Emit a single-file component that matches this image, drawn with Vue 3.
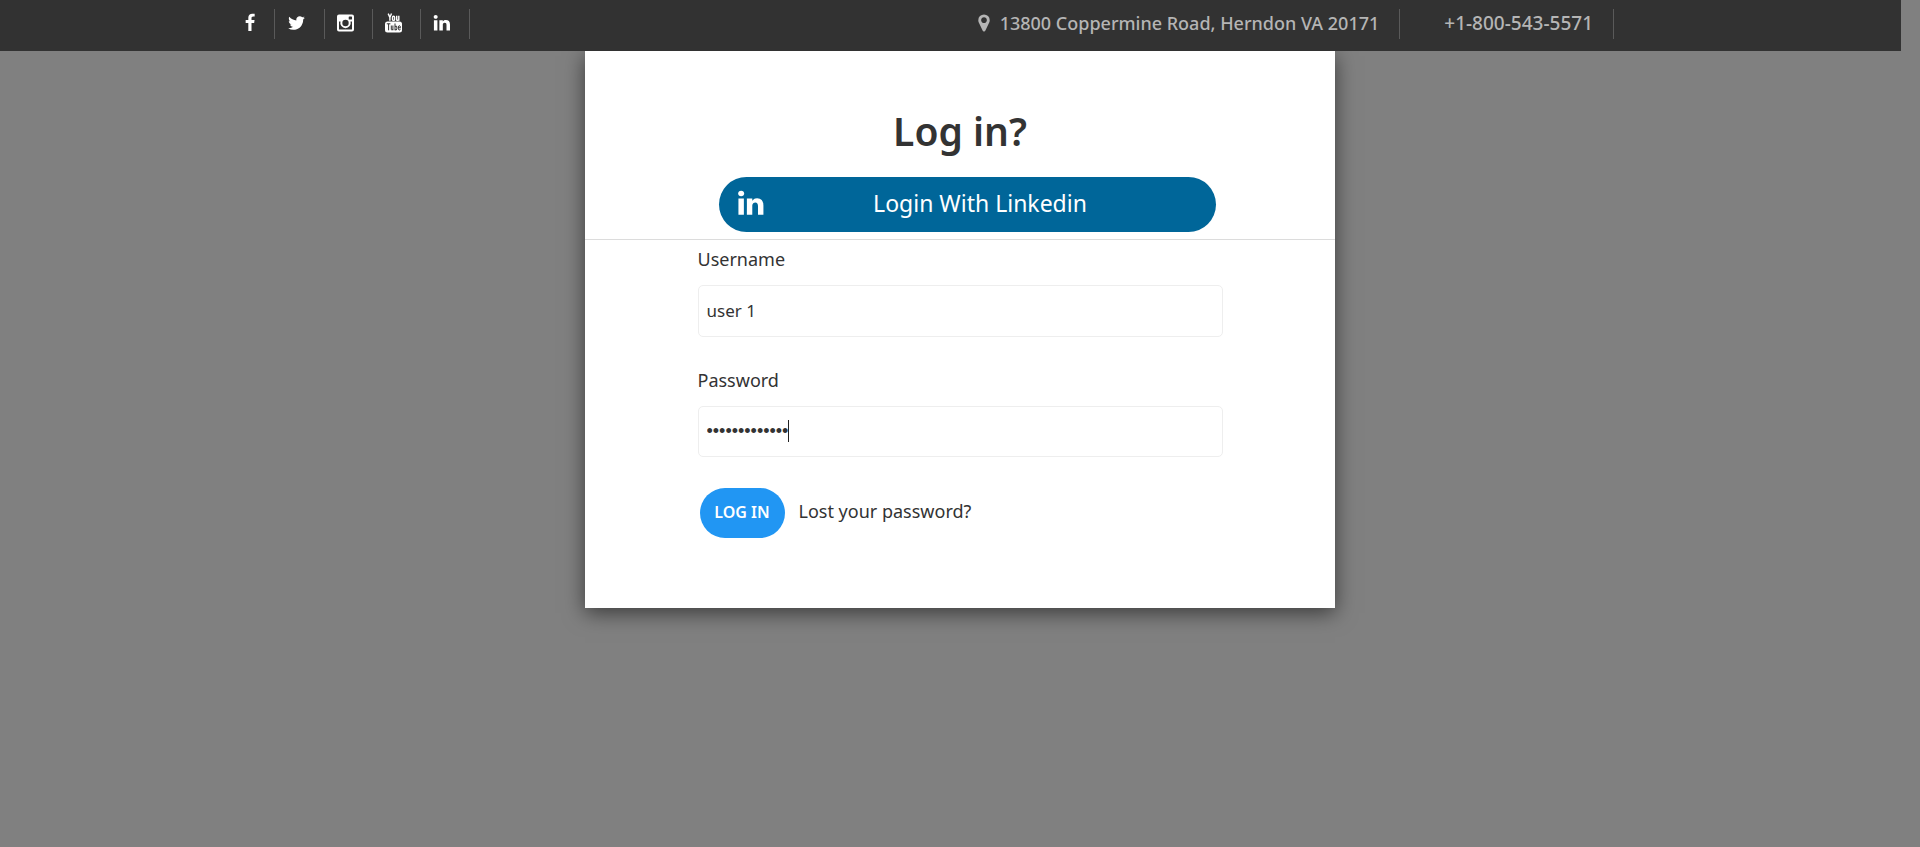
<script setup>
import { ref } from 'vue'

const username = ref('user 1')
const password = ref('secretpass123')

const linkedinPath = 'M477 625v991h-330v-991h330zm21-306q1 73-50.500 122t-135.500 49h-2q-82 0-132-49t-50-122q0-74 51.500-122.500t134.500-48.500 133 48.500 51 122.500zm1166 729v568h-329v-530q0-105-40.500-164.500t-126.500-59.500q-63 0-105.500 34.500t-63.500 85.500q-11 30-11 81v553h-329q2-399 2-647t-1-296l-1-48h329v144h-2q20-32 41-56t56.500-52 87-43.500 114.500-15.500q171 0 275 113.500t104 332.500z'
</script>

<template>
  <div class="page">
    <header class="topbar">
      <nav class="social">
        <a href="#" aria-label="Facebook">
          <svg width="12" height="20" viewBox="320 0 1152 1792"><path d="M1343 12v264h-157q-86 0-116 36t-30 108v189h293l-39 296h-254v759h-306v-759h-255v-296h255v-218q0-186 104-288.500t277-102.500q147 0 228 12z" /></svg>
        </a>
        <a href="#" aria-label="Twitter">
          <svg width="19" height="20" viewBox="0 0 1792 1792"><path d="M1684 408q-67 98-162 167 1 14 1 42 0 130-38 259.500t-115.500 248.500-184.500 210.500-258 146-323 54.500q-271 0-496-145 35 4 78 4 225 0 401-138-105-2-188-64.500t-114-159.500q33 5 61 5 43 0 85-11-112-23-185.500-111.500t-73.500-205.500v-4q68 38 146 41-66-44-105-115t-39-154q0-88 44-163 121 149 294.500 238.500t371.500 99.500q-8-38-8-74 0-134 94.500-228.500t228.500-94.500q140 0 236 102 109-21 205-78-37 115-142 178 93-10 186-50z" /></svg>
        </a>
        <a href="#" aria-label="Instagram">
          <svg width="17" height="20" viewBox="0 0 17 20"><path fill-rule="evenodd" d="M2 1.500h13a2 2 0 0 1 2 2v13a2 2 0 0 1-2 2H2a2 2 0 0 1-2-2v-13a2 2 0 0 1 2-2zM2 8.500v7.400q0 .6.6.6h11.800q.6 0 .6-.6V8.500h-1.500a5.200 5.200 0 1 1-10 0zM12.300 3.500q-.6 0-.6.6v1.800q0 .6.6.6h2.100q.6 0 .6-.6V4.100q0-.6-.6-.6z" /><circle cx="8.500" cy="10" r="3.200" class="hole" /></svg>
        </a>
        <a href="#" aria-label="YouTube">
          <svg width="17" height="20" viewBox="0 0 17 20">
            <g class="stroke">
              <path d="M3.200.6 4.900 4.400 6.500.6M4.900 4.400V7.800" />
              <rect x="7.500" y="3.200" width="2.100" height="4.200" rx="1" />
              <path d="M11.700 2.700v3.900q0 .9.800.8 1-.2 1.300-1M13.800 2.700v5.100" />
            </g>
            <rect x="0" y="8.500" width="17" height="11" rx="2.500" />
            <g class="stroke dark">
              <path d="M1.800 10.800h3.600M3.600 10.800v6.500M6.300 12.500v3.800q0 .8.700.6.700-.2.900-.8M7.900 12.500v4.800M10 10.500v6.800M10 13.500q1.800-1.200 1.800.4v1.900q0 1.800-1.800.9M15.300 15.800q0 1.200-.9 1.200-1 0-1-1.200v-1.900q0-1.200 1-1.200.9 0 .9 1.200v.9h-1.900" />
            </g>
          </svg>
        </a>
        <a href="#" aria-label="LinkedIn">
          <svg width="18" height="20" viewBox="60 0 1700 1792"><path :d="linkedinPath" /></svg>
        </a>
      </nav>
      <div class="contact">
        <span class="item address">
          <svg width="12" height="20" viewBox="360 0 1072 1792"><path d="M1152 640q0-106-75-181t-181-75-181 75-75 181 75 181 181 75 181-75 75-181zm256 0q0 109-33 179l-364 774q-16 33-47.500 52t-67.500 19-67.500-19-46.500-52l-365-774q-33-70-33-179 0-212 150-362t362-150 362 150 150 362z" /></svg>
          13800 Coppermine Road, Herndon VA 20171
        </span>
        <span class="item phone">+1-800-543-5571</span>
      </div>
    </header>

    <main class="modal">
      <h1>Log in?</h1>
      <div class="inner">
        <button type="button" class="linkedin">
          <svg width="28" height="30" viewBox="60 0 1700 1792"><path :d="linkedinPath" /></svg>
          <span>Login With Linkedin</span>
        </button>
      </div>
      <hr />
      <form class="inner" @submit.prevent>
        <label for="username">Username</label>
        <input id="username" v-model="username" type="text" />
        <label for="password">Password</label>
        <div class="field">
          <input id="password" v-model="password" type="password" />
          <span class="caret"></span>
        </div>
        <div class="actions">
          <button type="submit" class="submit">LOG IN</button>
          <a href="#">Lost your password?</a>
        </div>
      </form>
    </main>
  </div>
</template>

<style>
html,
body {
  background: #808080;
}
</style>

<style scoped>
.page {
  min-height: 100vh;
  font-family: "Noto Sans", "Open Sans", sans-serif;
  font-size: 18px;
  color: #333;
}
.page * {
  box-sizing: border-box;
}
svg {
  display: block;
  flex: none;
  fill: currentColor;
}
.topbar {
  position: relative;
  z-index: 1;
  display: flex;
  justify-content: space-between;
  margin-right: 19px;
  padding: 9px 287px 12px 232px;
  background: #323232;
}
.social,
.contact {
  display: flex;
}
.social a {
  display: flex;
  align-items: center;
  height: 30px;
  padding: 0 18px 2px 12px;
  border-right: 1px solid #5a5a5a;
  color: #fff;
}
.hole {
  fill: #323232;
}
.stroke {
  fill: none;
  stroke: currentColor;
  stroke-width: 1.4;
}
.dark {
  stroke: #323232;
  stroke-width: 1;
}
.item {
  display: flex;
  align-items: center;
  gap: 10px;
  height: 30px;
  padding: 0 20px 2px 0;
  border-right: 1px solid #5a5a5a;
  color: #b5b5b5;
  font-weight: 500;
  white-space: nowrap;
}
.phone {
  padding-left: 44px;
  font-size: 19px;
}
.modal {
  width: 750px;
  max-width: 100%;
  margin: 0 auto;
  padding: 52px 0 70px;
  background: #fff;
  box-shadow: 0 5px 20px rgba(0, 0, 0, 0.55);
}
h1 {
  margin: 0 0 18px;
  font-size: 39px;
  line-height: 56px;
  font-weight: 600;
  text-align: center;
}
.inner {
  padding: 0 15%;
}
.linkedin {
  display: flex;
  align-items: center;
  width: calc(100% - 28px);
  height: 55px;
  margin-left: 21px;
  padding: 0 20px 4px 18px;
  border: 0;
  border-radius: 28px;
  background: #006699;
  color: #fff;
  font: 400 23px "Noto Sans", sans-serif;
}
.linkedin span {
  flex: 1;
}
hr {
  height: 1px;
  margin: 7px 0;
  border: 0;
  background: #dcdcdc;
}
label {
  display: block;
  margin-bottom: 14px;
  line-height: 24px;
}
input {
  display: block;
  width: 100%;
  height: 52px;
  margin-bottom: 31px;
  padding: 0 8px 2px;
  border: 1px solid #eee;
  border-radius: 5px;
  outline: 0;
  background: #fff;
  color: #333;
  font: 17px "Noto Sans", sans-serif;
}
.field {
  position: relative;
}
.field input {
  height: 51px;
  padding-bottom: 0;
  font: 18px "Liberation Sans", sans-serif;
}
.caret {
  position: absolute;
  top: 14px;
  left: 90px;
  width: 1px;
  height: 22px;
  background: #222;
}
.actions {
  display: flex;
  align-items: center;
  gap: 14px;
  padding-left: 2px;
}
.submit {
  width: 85px;
  height: 50px;
  padding: 0 0 2px;
  border: 0;
  border-radius: 25px;
  background: #2196f3;
  color: #fff;
  font: 600 16px "Noto Sans", sans-serif;
}
.actions a {
  padding-bottom: 4px;
  color: #333;
  text-decoration: none;
}
</style>
